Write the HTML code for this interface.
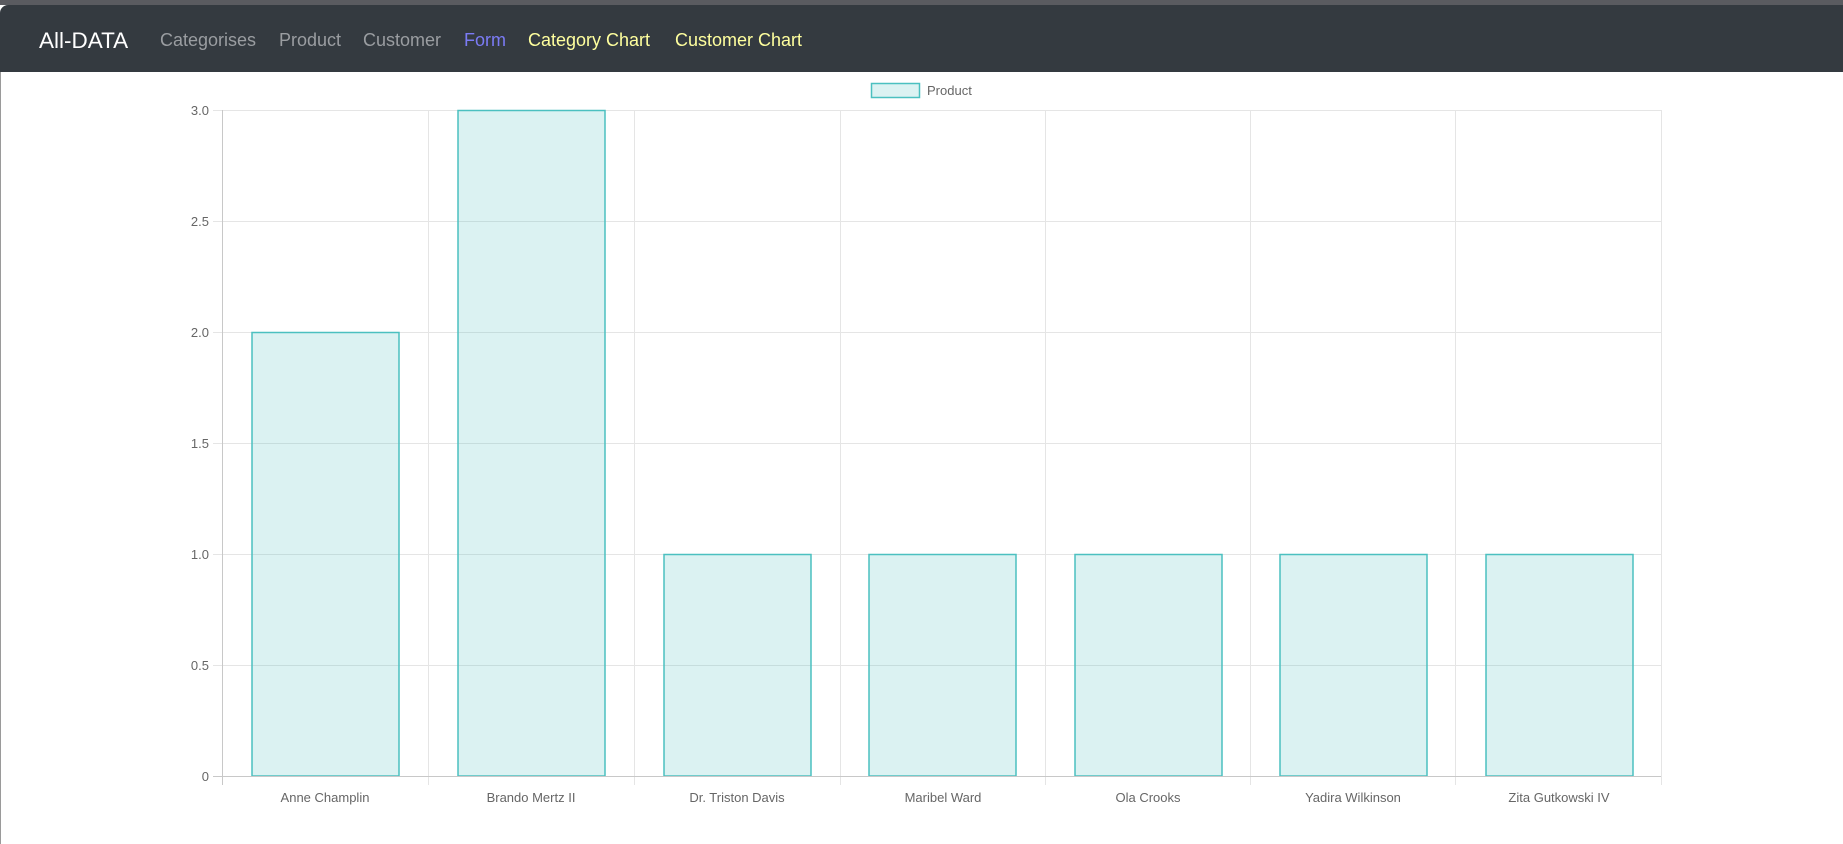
<!DOCTYPE html>
<html><head><meta charset="utf-8"><style>
html,body{margin:0;padding:0;width:1843px;height:844px;overflow:hidden;background:#fff;font-family:"Liberation Sans",sans-serif}
.top{position:absolute;left:0;top:0;width:1843px;height:5px;background:#5a5b60}
.nav{position:absolute;left:0;top:5px;width:1843px;height:67px;background:#343a40;border-top-left-radius:8px}
.nav span{position:absolute;top:2px;line-height:67px;font-size:18px;white-space:nowrap}
.brand{font-size:22.5px!important;color:#fff}
.edge{position:absolute;left:0;top:72px;width:1px;height:772px;background:#9a9a9a}
</style></head><body>
<div class="top"></div>
<div class="nav">
<span class="brand" style="left:39px">All-DATA</span>
<span style="left:160px;color:#9a9da1">Categorises</span>
<span style="left:279px;color:#9a9da1">Product</span>
<span style="left:363px;color:#9a9da1">Customer</span>
<span style="left:464px;color:#7b7bf5">Form</span>
<span style="left:528px;color:#ffff9e">Category Chart</span>
<span style="left:675px;color:#ffff9e">Customer Chart</span>
</div>
<div class="edge"></div>
<svg width="1843" height="844" style="position:absolute;left:0;top:0" font-family="Liberation Sans, sans-serif" font-size="13" fill="#666">
<rect x="871.5" y="83.5" width="48" height="14" fill="rgba(75,192,192,0.2)" stroke="rgb(75,192,192)" stroke-width="1.5"/>
<text x="927" y="95">Product</text>
<g stroke="#e5e5e5" stroke-width="1">
<line x1="213" y1="110.5" x2="1661" y2="110.5"/>
<line x1="213" y1="221.5" x2="1661" y2="221.5"/>
<line x1="213" y1="332.5" x2="1661" y2="332.5"/>
<line x1="213" y1="443.5" x2="1661" y2="443.5"/>
<line x1="213" y1="554.5" x2="1661" y2="554.5"/>
<line x1="213" y1="665.5" x2="1661" y2="665.5"/>
<line x1="428.5" y1="110" x2="428.5" y2="785"/>
<line x1="634.5" y1="110" x2="634.5" y2="785"/>
<line x1="840.5" y1="110" x2="840.5" y2="785"/>
<line x1="1045.5" y1="110" x2="1045.5" y2="785"/>
<line x1="1250.5" y1="110" x2="1250.5" y2="785"/>
<line x1="1455.5" y1="110" x2="1455.5" y2="785"/>
<line x1="1661.5" y1="110" x2="1661.5" y2="785"/>
</g>
<g fill="rgba(75,192,192,0.2)" stroke="rgb(75,192,192)" stroke-width="1.5">
<rect x="252" y="332.5" width="147" height="443.5"/>
<rect x="458" y="110.5" width="147" height="665.5"/>
<rect x="664" y="554.5" width="147" height="221.5"/>
<rect x="869" y="554.5" width="147" height="221.5"/>
<rect x="1075" y="554.5" width="147" height="221.5"/>
<rect x="1280" y="554.5" width="147" height="221.5"/>
<rect x="1486" y="554.5" width="147" height="221.5"/>
</g>
<g stroke="#c8c8c8" stroke-width="1">
<line x1="222.5" y1="110" x2="222.5" y2="785"/>
<line x1="213" y1="776.5" x2="1661" y2="776.5"/>
</g>
<g text-anchor="end">
<text x="209" y="115">3.0</text>
<text x="209" y="226">2.5</text>
<text x="209" y="337">2.0</text>
<text x="209" y="448">1.5</text>
<text x="209" y="559">1.0</text>
<text x="209" y="670">0.5</text>
<text x="209" y="781">0</text>
</g>
<g text-anchor="middle">
<text x="325" y="802">Anne Champlin</text>
<text x="531" y="802">Brando Mertz II</text>
<text x="737" y="802">Dr. Triston Davis</text>
<text x="943" y="802">Maribel Ward</text>
<text x="1148" y="802">Ola Crooks</text>
<text x="1353" y="802">Yadira Wilkinson</text>
<text x="1559" y="802">Zita Gutkowski IV</text>
</g>
</svg>
</body></html>
